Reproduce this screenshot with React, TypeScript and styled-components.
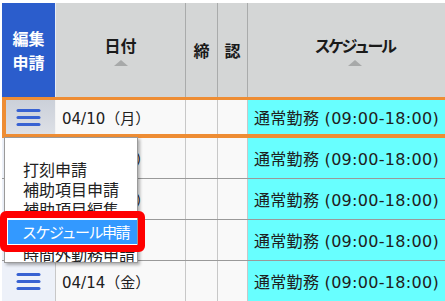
import * as React from 'react'
import styled, { createGlobalStyle, css } from 'styled-components'

const GlobalStyle = createGlobalStyle`
  html, body {
    margin: 0;
    padding: 0;
    background: #ffffff;
  }
  body {
    font-family: "DejaVu Sans", "Noto Sans CJK JP", sans-serif;
    color: #1e1e1e;
  }
`

const COLUMNS = '54px 130px 32px 30px 214px'

const Page = styled.div`
  position: relative;
  width: 445px;
  height: 301px;
  overflow: hidden;
  padding: 3px 0 0 2px;
  box-sizing: border-box;
`

const Grid = styled.div`
  display: flex;
  flex-direction: column;
  width: 460px;
`

const HeaderRow = styled.div`
  display: grid;
  grid-template-columns: ${COLUMNS};
  height: 94px;
  background: #d4d6d6;
`

const HeadCell = styled.div<{ $edit?: boolean; $tight?: boolean }>`
  display: flex;
  flex-direction: column;
  align-items: center;
  justify-content: center;
  gap: 5px;
  box-sizing: border-box;
  border-right: 1px solid ${p => (p.$edit ? '#e8ecf4' : '#a9abab')};
  font-family: "Noto Sans CJK JP", sans-serif;
  font-size: 16px;
  font-weight: bold;
  line-height: 20px;
  color: #1a1a1a;
  letter-spacing: ${p => (p.$tight ? '-2.5px' : '0')};
  ${p =>
    p.$edit &&
    css`
      background: #2b5dcc;
      color: #ffffff;
      line-height: 24px;
      gap: 0;
    `}
`

const SortMark = styled.div`
  width: 0;
  height: 0;
  border-left: 7px solid transparent;
  border-right: 7px solid transparent;
  border-bottom: 6px solid #a7a9a9;
`

const BodyRow = styled.div<{ $selected?: boolean }>`
  display: grid;
  grid-template-columns: ${COLUMNS};
  height: 41px;
  box-sizing: border-box;
  border-bottom: 1px solid #9a9a9a;
  ${p =>
    p.$selected &&
    css`
      border-top: 3px solid #ee8d34;
      border-bottom: 4px solid #ee8d34;
    `}
`

const EditCell = styled.div<{ $selected?: boolean }>`
  display: flex;
  align-items: center;
  justify-content: center;
  box-sizing: border-box;
  border-right: 1px solid #c8c8c8;
  background: #edf1f9;
  ${p =>
    p.$selected &&
    css`
      border-left: 4px solid #ee8d34;
      border-right: 1px solid #f4f4f4;
      background: linear-gradient(#cbd0d9, #dde0e6);
      padding-right: 4px;
    `}
`

const Cell = styled.div<{ $schedule?: boolean }>`
  display: flex;
  align-items: center;
  box-sizing: border-box;
  padding-left: 6px;
  border-right: 1px solid #c8c8c8;
  background: ${p => (p.$schedule ? '#68ffff' : '#f9f9f9')};
  font-size: ${p => (p.$schedule ? '16px' : '15px')};
  letter-spacing: ${p => (p.$schedule ? '0.3px' : '0')};
  color: #202020;
  white-space: nowrap;
  overflow: hidden;
`

const Menu = styled.div`
  position: absolute;
  left: 4px;
  top: 137px;
  width: 134px;
  height: 126px;
  box-sizing: border-box;
  padding: 21px 0 0 0;
  background: #ffffff;
  border: 1px solid #9a9a9a;
  box-shadow: 2px 2px 3px rgba(0, 0, 0, 0.3);
  overflow: hidden;
`

const MenuItem = styled.div<{ $active?: boolean }>`
  height: 20px;
  line-height: 20px;
  padding-left: 18px;
  font-family: "Noto Sans CJK JP", sans-serif;
  font-size: 16px;
  color: #222222;
  white-space: nowrap;
  ${p =>
    p.$active &&
    css`
      height: 24px;
      line-height: 24px;
      margin: 1px 0 0 3px;
      padding-left: 14px;
      font-size: 15px;
      letter-spacing: -1.5px;
      background: #3399ff;
      color: #ffffff;
    `}
`

const Callout = styled.div`
  position: absolute;
  left: 0;
  top: 211px;
  width: 145px;
  height: 41px;
  box-sizing: border-box;
  border: 7px solid #ff0000;
  border-radius: 6px;
`

const MenuIcon = () => (
  <svg width="25" height="17" viewBox="0 0 25 17">
    <rect x="0.5" y="0" width="24" height="3" rx="1.5" fill="#3862d2" />
    <rect x="0.5" y="7" width="24" height="3" rx="1.5" fill="#3862d2" />
    <rect x="0.5" y="14" width="24" height="3" rx="1.5" fill="#3862d2" />
  </svg>
)

const days = ['04/10（月）', '04/11（火）', '04/12（水）', '04/13（木）', '04/14（金）']
const menuItems = ['打刻申請', '補助項目申請', '補助項目編集', 'スケジュール申請', '時間外勤務申請']

export default function App() {
  return (
    <Page>
      <GlobalStyle />
      <Grid>
        <HeaderRow>
          <HeadCell $edit>
            <div>編集</div>
            <div>申請</div>
          </HeadCell>
          <HeadCell>
            <div>日付</div>
            <SortMark />
          </HeadCell>
          <HeadCell>締</HeadCell>
          <HeadCell>認</HeadCell>
          <HeadCell $tight>
            <div>スケジュール</div>
            <SortMark />
          </HeadCell>
        </HeaderRow>
        {days.map((day, i) => (
          <BodyRow key={day} $selected={i === 0}>
            <EditCell $selected={i === 0}>
              <MenuIcon />
            </EditCell>
            <Cell>{day}</Cell>
            <Cell />
            <Cell />
            <Cell $schedule>通常勤務 (09:00-18:00)</Cell>
          </BodyRow>
        ))}
      </Grid>
      <Menu>
        {menuItems.map(item => (
          <MenuItem key={item} $active={item === 'スケジュール申請'}>
            {item}
          </MenuItem>
        ))}
      </Menu>
      <Callout />
    </Page>
  )
}
